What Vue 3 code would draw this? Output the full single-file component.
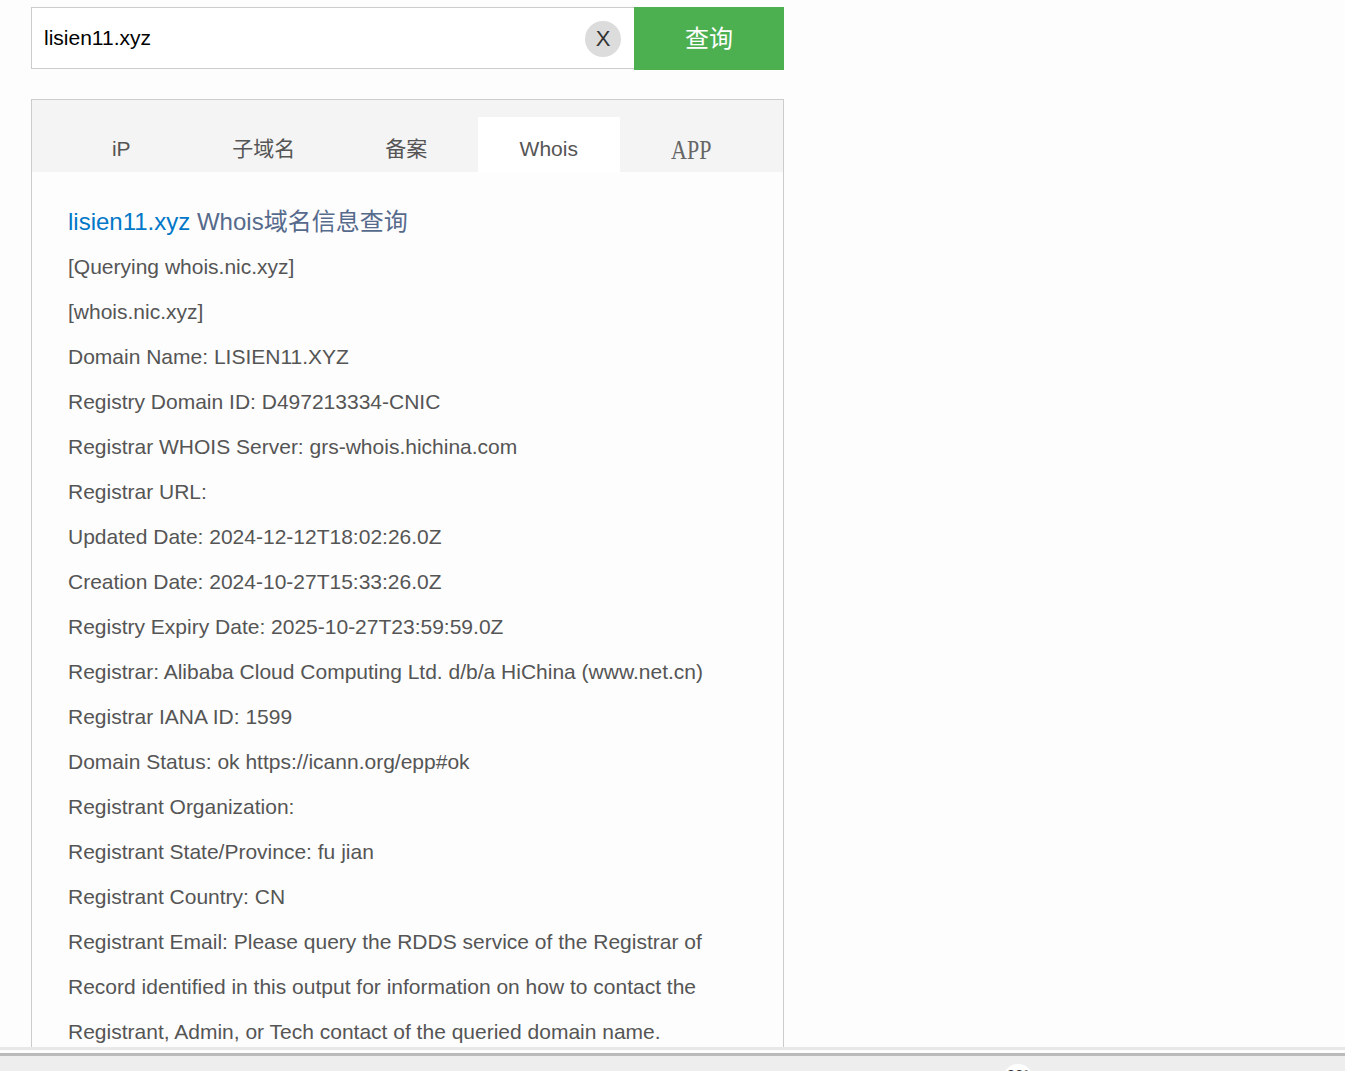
<script setup>
const tabs = ['iP', '子域名', '备案', 'Whois', 'APP']
const lines = [
  '[Querying whois.nic.xyz]',
  '[whois.nic.xyz]',
  'Domain Name: LISIEN11.XYZ',
  'Registry Domain ID: D497213334-CNIC',
  'Registrar WHOIS Server: grs-whois.hichina.com',
  'Registrar URL:',
  'Updated Date: 2024-12-12T18:02:26.0Z',
  'Creation Date: 2024-10-27T15:33:26.0Z',
  'Registry Expiry Date: 2025-10-27T23:59:59.0Z',
  'Registrar: Alibaba Cloud Computing Ltd. d/b/a HiChina (www.net.cn)',
  'Registrar IANA ID: 1599',
  'Domain Status: ok https://icann.org/epp#ok',
  'Registrant Organization:',
  'Registrant State/Province: fu jian',
  'Registrant Country: CN',
  'Registrant Email: Please query the RDDS service of the Registrar of',
  'Record identified in this output for information on how to contact the',
  'Registrant, Admin, or Tech contact of the queried domain name.'
]
</script>

<template>
  <div class="screen">
    <div class="page">
      <div class="wrap">
        <div class="search">
          <div class="field">
            <span class="value">lisien11.xyz</span>
            <span class="clear">X</span>
          </div>
          <div class="btn"><span class="btn-label">查询</span></div>
        </div>
        <div class="panel">
          <div class="tabs">
            <div
              v-for="t in tabs"
              :key="t"
              class="tab"
              :class="{ active: t === 'Whois', app: t === 'APP' }"
            ><span class="tab-label">{{ t }}</span></div>
          </div>
          <div class="body">
            <h2 class="title"><span class="domain">lisien11.xyz</span> Whois域名信息查询</h2>
            <p v-for="l in lines" :key="l" class="line">{{ l }}</p>
          </div>
        </div>
      </div>
    </div>
    <div class="bottom">
      <div class="edge"></div>
      <div class="bar"><span class="temp">32°</span></div>
    </div>
  </div>
</template>

<style>
html, body { margin: 0; overflow: hidden; background: #fdfdfd; }
</style>

<style scoped>
.screen {
  height: 1071px;
  display: flex;
  flex-direction: column;
  overflow: hidden;
  font-family: "Liberation Sans", "Noto Sans CJK SC", sans-serif;
  background: #fdfdfd;
}
.page { height: 1047px; overflow: hidden; flex: none; }
.wrap { width: 753px; margin-left: 31px; padding-top: 7px; }
.search { display: flex; align-items: flex-start; }
.field {
  box-sizing: border-box;
  width: 603px;
  height: 62px;
  border: 1px solid #ccc;
  border-right: 0;
  background: #fff;
  display: flex;
  align-items: center;
  justify-content: space-between;
  padding: 0 13px 0 12px;
}
.value { font-size: 21px; color: #000; }
.clear {
  width: 36px;
  height: 36px;
  margin-top: 1px;
  border-radius: 50%;
  background: #dcdcdc;
  color: #333;
  font-size: 22px;
  display: flex;
  align-items: center;
  justify-content: center;
}
.btn {
  width: 150px;
  height: 63px;
  background: #4caf50;
  color: #fff;
  font-size: 24px;
  display: flex;
  align-items: center;
  justify-content: center;
}
.btn-label { margin-top: -4px; }
.panel {
  box-sizing: border-box;
  margin-top: 29px;
  border: 1px solid #ccc;
  background: #fdfdfd;
}
.tabs {
  height: 72px;
  box-sizing: border-box;
  padding: 17px 0 0 18px;
  background: #f4f4f4;
  display: flex;
}
.tab {
  width: 142.5px;
  height: 55px;
  box-sizing: border-box;
  padding-top: 20px;
  text-align: center;
  font-size: 21px;
  line-height: 24px;
  color: #555;
}
.tab.active { background: #fff; }
.tab.app { font-family: "Liberation Serif", serif; font-size: 22px; color: #666; padding-top: 21px; }
.tab.app .tab-label { display: inline-block; transform: scaleY(1.25); }
.body { padding: 33px 36px 0; }
.title {
  margin: 0 0 5px;
  font-size: 24px;
  line-height: 34px;
  font-weight: 400;
  color: #566a8c;
}
.domain { color: #0077c8; }
.line {
  margin: 0;
  font-size: 21px;
  line-height: 45px;
  color: #555;
  white-space: nowrap;
}
.bottom { flex: 1; display: flex; flex-direction: column; background: #eee; }
.edge {
  height: 3px;
  background: #fdfdfd;
  border-top: 3px solid #e8e8e8;
  border-bottom: 3px solid #bbb;
}
.bar { flex: 1; position: relative; overflow: hidden; }
.temp {
  position: absolute;
  left: 1003px;
  top: 8px;
  width: 30px;
  height: 30px;
  border-radius: 50%;
  background: #fff;
  text-align: center;
  font-size: 15px;
  line-height: 21px;
  color: #333;
}
</style>
